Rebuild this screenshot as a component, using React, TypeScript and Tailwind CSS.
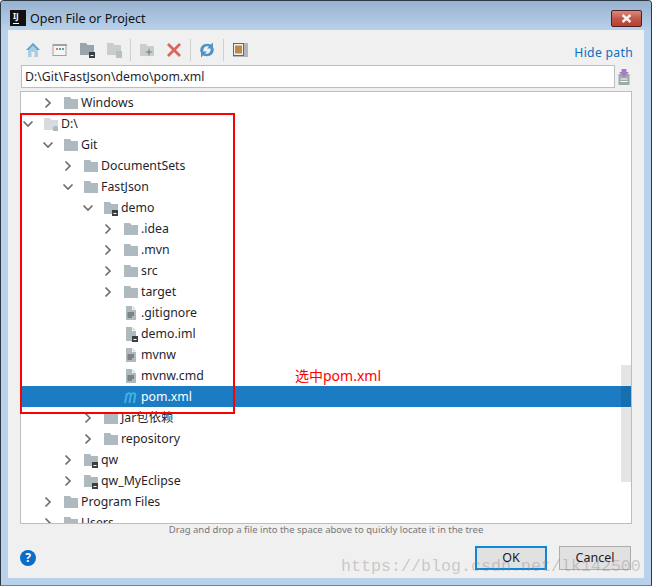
import React from 'react';

type RowKind = 'folder' | 'folderMod' | 'drive' | 'file' | 'fileMod' | 'maven';

interface Row {
  name: string;
  indent: string;
  chevron?: 'open' | 'closed';
  kind: RowKind;
  selected?: boolean;
}

const rows: Row[] = [
  { name: 'Windows', indent: 'pl-[21px]', chevron: 'closed', kind: 'folder' },
  { name: 'D:\\', indent: 'pl-[1px]', chevron: 'open', kind: 'drive' },
  { name: 'Git', indent: 'pl-[21px]', chevron: 'open', kind: 'folder' },
  { name: 'DocumentSets', indent: 'pl-[41px]', chevron: 'closed', kind: 'folder' },
  { name: 'FastJson', indent: 'pl-[41px]', chevron: 'open', kind: 'folder' },
  { name: 'demo', indent: 'pl-[61px]', chevron: 'open', kind: 'folderMod' },
  { name: '.idea', indent: 'pl-[81px]', chevron: 'closed', kind: 'folder' },
  { name: '.mvn', indent: 'pl-[81px]', chevron: 'closed', kind: 'folder' },
  { name: 'src', indent: 'pl-[81px]', chevron: 'closed', kind: 'folder' },
  { name: 'target', indent: 'pl-[81px]', chevron: 'closed', kind: 'folder' },
  { name: '.gitignore', indent: 'pl-[81px]', kind: 'file' },
  { name: 'demo.iml', indent: 'pl-[81px]', kind: 'fileMod' },
  { name: 'mvnw', indent: 'pl-[81px]', kind: 'file' },
  { name: 'mvnw.cmd', indent: 'pl-[81px]', kind: 'file' },
  { name: 'pom.xml', indent: 'pl-[81px]', kind: 'maven', selected: true },
  { name: 'Jar包依赖', indent: 'pl-[61px]', chevron: 'closed', kind: 'folder' },
  { name: 'repository', indent: 'pl-[61px]', chevron: 'closed', kind: 'folder' },
  { name: 'qw', indent: 'pl-[41px]', chevron: 'closed', kind: 'folderMod' },
  { name: 'qw_MyEclipse', indent: 'pl-[41px]', chevron: 'closed', kind: 'folderMod' },
  { name: 'Program Files', indent: 'pl-[21px]', chevron: 'closed', kind: 'folder' },
  { name: 'Users', indent: 'pl-[21px]', chevron: 'closed', kind: 'folder' },
];

const Chevron = ({ open }: { open: boolean }) => (
  <svg width="12" height="12" viewBox="0 0 12 12" fill="none" stroke="#6e6e6e" strokeWidth="1.7">
    <path d={open ? 'M1.5 3.5 L6 8 L10.5 3.5' : 'M3.5 1.5 L8 6 L3.5 10.5'} />
  </svg>
);

const ModBadge = ({ x = 9 }: { x?: number }) => (
  <g>
    <rect x={x} y="10" width="6" height="6" fill="#3c3f41" />
    <rect x={x + 1.5} y="13" width="3" height="1" fill="#fff" />
  </g>
);

const TreeIcon = ({ kind, color = '#afb9c0' }: { kind: RowKind; color?: string }) => {
  if (kind === 'maven') {
    return (
      <svg width="16" height="16" viewBox="0 0 16 16" fill="none" stroke="#3fb0e2" strokeWidth="2">
        <path d="M2 14 L4 4 M3.6 6 C5 4 8 3.5 7.8 6 L6.4 14 M8 6 C9.5 4 12.6 3.5 12.3 6 L10.9 14" />
      </svg>
    );
  }
  if (kind === 'file' || kind === 'fileMod') {
    return (
      <svg width="16" height="16" viewBox="0 0 16 16">
        <path d="M3 1 H9 V5 H3 Z M3 5 H13 V15 H3 Z" fill={color} />
        <path d="M9.5 1 L13 4.5 H9.5 Z" fill="#d5dbde" />
        {kind === 'file' ? (
          <path d="M4.5 8 H11 M4.5 10 H11 M4.5 12 H9" stroke="#4d4d4d" strokeWidth="1" />
        ) : (
          <ModBadge x={9} />
        )}
      </svg>
    );
  }
  const drive = kind === 'drive';
  return (
    <svg width="16" height="16" viewBox="0 0 16 16">
      <path d="M1 2 H7 L8.5 4 H15 V14 H1 Z" fill={drive ? '#d5dbde' : color} />
      {kind === 'folderMod' && <ModBadge />}
      {drive && <path d="M11 11 V10 H14 V11 H15 V15 H10 V11 Z" fill="#afb9c0" />}
    </svg>
  );
};

const TreeRow = ({ row }: { row: Row }) => (
  <div className={`flex items-center h-[21px] shrink-0 ${row.indent} ${row.selected ? 'bg-[#1b7cc4] text-white' : 'text-[#1f1f2e]'}`}>
    <span className="w-[12px] h-[12px] mr-[9px] flex">
      {row.chevron && <Chevron open={row.chevron === 'open'} />}
    </span>
    <TreeIcon kind={row.kind} />
    <span className="ml-[2px] pt-[2px] whitespace-nowrap">{row.name}</span>
  </div>
);

const ToolSep = () => <div className="w-px h-[22px] bg-[#cfcfcf] mx-[2.5px]" />;

const ToolIcon = ({ children }: { children: React.ReactNode }) => (
  <svg width="16" height="16" viewBox="0 0 16 16" className="mx-[5.5px] shrink-0">
    {children}
  </svg>
);

const Toolbar = () => (
  <div className="flex items-center h-[30px] pl-[11px]">
    <ToolIcon>
      <path d="M8 1 L1 8 H3 V15 H6.5 V10 H9.5 V15 H13 V8 H15 Z" fill="#a9cfe2" />
      <path d="M8 1 L1 8 H3.5 L8 3.5 L12.5 8 H15 Z" fill="#5fa3cc" />
    </ToolIcon>
    <ToolIcon>
      <rect x="1" y="2.5" width="13" height="11" fill="#f5f5f5" stroke="#9aa3a8" />
      <rect x="1" y="2" width="14" height="2" fill="#9aa3a8" />
      <rect x="4" y="6" width="2" height="2" fill="#e0736a" />
      <rect x="7" y="6" width="2" height="2" fill="#6aa84f" />
      <rect x="10" y="6" width="2" height="2" fill="#5a9bd5" />
    </ToolIcon>
    <ToolIcon>
      <path d="M1 1 H7 L8.5 3 H15 V13 H1 Z" fill="#9aa5ab" />
      <ModBadge x={10} />
    </ToolIcon>
    <ToolIcon>
      <path d="M1 1 H7 L8.5 3 H15 V13 H1 Z" fill="#c8cdd0" />
      <rect x="10" y="9" width="6" height="7" fill="#bdbdbd" />
    </ToolIcon>
    <ToolSep />
    <ToolIcon>
      <path d="M1 2 H7 L8.5 4 H15 V14 H1 Z" fill="#c8cdd0" />
      <path d="M10 6 L11 9 L14 10 L11 11 L10 14.5 L9 11 L6 10 L9 9 Z" fill="#8e8e8e" />
    </ToolIcon>
    <ToolIcon>
      <path d="M2 2 L14 14 M14 2 L2 14" stroke="#d9655b" strokeWidth="2.8" />
    </ToolIcon>
    <ToolSep />
    <ToolIcon>
      <path d="M1.5 10 C0 4 6 0 12 2.5 L14 0.5 V6.5 H8 L10 4.5 C7 3.5 3.5 5.5 4.5 10 L3 11.5 Z" fill="#4d94c7" />
      <path d="M14.5 6 C16 12 10 16 4 13.5 L2 15.5 V9.5 H8 L6 11.5 C9 12.5 12.5 10.5 11.5 6 L13 4.5 Z" fill="#4d94c7" />
    </ToolIcon>
    <ToolSep />
    <ToolIcon>
      <rect x="1" y="1" width="15" height="14" fill="#b5b5b5" />
      <rect x="1.5" y="1.5" width="10" height="12" fill="#f2f2f2" stroke="#666" />
      <rect x="3" y="3.5" width="7" height="8" fill="#c08a45" />
    </ToolIcon>
    <span className="ml-auto mr-[11px] mt-[6px] text-[12.2px] tracking-[0.3px] text-[#0a6fc2]">Hide path</span>
  </div>
);

const PathField = () => (
  <div className="flex items-center pl-[13px] pr-[14px] gap-[3px]">
    <div className="flex-1 h-[23px] bg-white border border-[#bdbdbd] pl-[3px] pt-[2px] flex items-center text-[12.3px] text-[#1f1f2e]">
      D:\Git\FastJson\demo\pom.xml
    </div>
    <svg width="12" height="16" viewBox="0 0 12 16">
      <rect x="0.5" y="5" width="11" height="11" fill="#9fa9ab" />
      <path d="M2.5 10 H9.5 M2.5 12.5 H9.5" stroke="#fff" strokeWidth="1" />
      <path d="M3.5 0 H8.5 V3 H11 L6 8 L1 3 H3.5 Z" fill="#a87cc4" />
    </svg>
  </div>
);

const Tree = () => (
  <div className="relative mx-[12px] mt-[3px] h-[433px] bg-white border border-[#bdbdbd] overflow-hidden">
    <div className="flex flex-col text-[12.3px] h-full">
      {rows.map((row) => (
        <TreeRow key={row.name} row={row} />
      ))}
    </div>
    {/* scrollbar sits over the rows */}
    <div className="absolute left-[600px] top-[273px] w-[10px] h-[117px] bg-[#000000]/10" />
  </div>
);

const Footer = () => (
  <div className="flex items-center pl-[12px] pr-[13px] mt-[10px]">
    <span className="w-[16px] h-[16px] rounded-full bg-[#0b6cc9] text-white text-[12px] font-bold flex items-center justify-center">?</span>
    <button className="ml-auto w-[72px] h-[24px] bg-[#e1e1e1] border-2 border-[#0f85dc] text-[12.5px] text-[#1a1a1a]">OK</button>
    <button className="ml-[12px] w-[72px] h-[24px] bg-[#e1e1e1] border border-[#adadad] text-[12.5px] text-[#1a1a1a]">Cancel</button>
  </div>
);

export default function App() {
  return (
    <div className="relative w-[652px] h-[586px] overflow-hidden bg-[#b9d1ea] border border-[#2b3a44] border-b-[#1fa3c4] rounded-t-[4px] font-['Noto_Sans','Noto_Sans_CJK_SC',sans-serif]">
      <div className="flex items-center h-[29px] pt-[5px] pl-[9px] pr-[9px] bg-gradient-to-b from-[#98b2cf] to-[#b9d1ea]">
        <span className="relative w-[16px] h-[16px] bg-[#111] text-white text-[8px] font-bold leading-[11px] pl-[3px]">
          IJ
          <span className="absolute left-[3px] bottom-[2px] w-[6px] h-px bg-white" />
        </span>
        <span className="ml-[4px] pt-[2px] text-[12.5px] text-[#111]">Open File or Project</span>
        <span className="ml-auto w-[31px] h-[17px] flex items-center justify-center rounded-[2px] border border-[#4a1f25] bg-gradient-to-b from-[#d9897c] via-[#c0574a] to-[#b5402f]">
          <svg width="11" height="9" viewBox="0 0 11 9">
            <path d="M1.5 1 L9.5 8 M9.5 1 L1.5 8" stroke="#f3f3f3" strokeWidth="2.4" />
          </svg>
        </span>
      </div>

      <div className="ml-[7px] mr-[7px] h-[548px] bg-[#f0f0f0] flex flex-col">
        <div className="h-[5px]" />
        <Toolbar />
        <PathField />
        <Tree />
        <div className="text-center text-[9.5px] leading-[12px] text-[#777]">
          Drag and drop a file into the space above to quickly locate it in the tree
        </div>
        <Footer />
      </div>

      {/* annotation drawn on the screenshot */}
      <div className="absolute left-[19px] top-[112px] w-[215px] h-[301px] border-2 border-[#ff0000]" />
      <span className="absolute left-[294px] top-[365px] text-[14px] leading-[20px] text-[#ff0000]">选中pom.xml</span>
      <span className="absolute left-[340px] top-[556px] text-[16.67px] leading-[20px] font-['Liberation_Mono',monospace] text-[#8a8a8a]/40 whitespace-nowrap">
        https://blog.csdn.net/lk142500
      </span>
    </div>
  );
}
